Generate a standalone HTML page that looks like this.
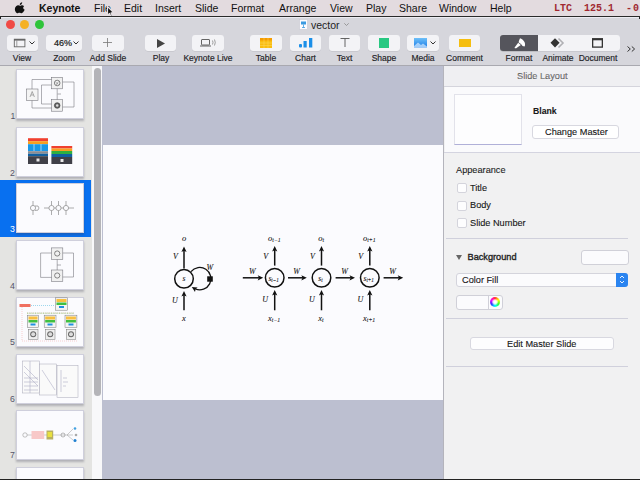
<!DOCTYPE html>
<html><head><meta charset="utf-8">
<style>
*{margin:0;padding:0;box-sizing:border-box}
html,body{width:640px;height:480px;overflow:hidden;background:#000;font-family:"Liberation Sans",sans-serif}
.a{position:absolute}
svg{position:absolute;overflow:visible}
#menubar{left:0;top:0;width:640px;height:16px;background:#e3dbdf}
#menubar span{position:absolute;top:2px;font-size:10.5px;color:#111;line-height:12px;white-space:nowrap}
#menubar span.m{font-family:"Liberation Mono",monospace;font-size:10px;font-weight:bold;color:#a02830;top:2px;transform:scaleY(1.12);transform-origin:0 0}
#mbline{left:0;top:16px;width:640px;height:1px;background:#2a2a2a}
#toolbar{left:0;top:17px;width:640px;height:48px;background:#d6d6dc}
#tbline{left:0;top:65px;width:640px;height:1px;background:#a9a9b0}
.light{position:absolute;width:9px;height:9px;border-radius:50%;top:20px}
.btn{position:absolute;top:35px;height:16px;background:#f3f3f6;border-radius:3px;box-shadow:0 0.5px 0.5px rgba(0,0,0,0.12)}
.lbl{position:absolute;top:53px;width:60px;font-size:8.5px;color:#202024;-webkit-text-stroke:0.15px #202024;white-space:nowrap;text-align:center;line-height:10px}
#sidebar{left:0;top:66px;width:92px;height:413px;background:#e4e4e2}
#strack{left:91.5px;top:66px;width:10.5px;height:413px;background:#f8f8fa}
#sthumb{left:94px;top:67.5px;width:7px;height:328px;background:#b4b4b8;border-radius:4px}
#canvas{left:102px;top:66px;width:342px;height:413px;background:#bcbfd0}
#slide{left:103px;top:145px;width:340px;height:255px;background:#fbfbfe}
#insp{left:443px;top:66px;width:197px;height:413px;background:#f1f1f2;border-left:1px solid #b4b4bc}
.th{position:absolute;left:16px;width:68px;height:50px;background:#fbfbfe;border:1px solid #cfcfdc;box-shadow:0 1.5px 2px rgba(60,60,80,0.3)}
.num{position:absolute;left:10px;font-size:8.7px;color:#55556a;line-height:10px}
.t9{font-size:9.2px;line-height:11px;white-space:nowrap;-webkit-text-stroke:0.1px #000}
.cb{position:absolute;left:457px;width:10px;height:10px;background:#fdfdfe;border:1px solid #d4d4dc;border-radius:2px}
#bottom{left:0;top:479px;width:640px;height:1px;background:#222}
</style></head><body>
<!-- MENUBAR -->
<div id="menubar" class="a">
  <svg style="left:16px;top:1.6px" width="9" height="11" viewBox="0 0 9 11"><path d="M6.2 0.2c0.1 0.8-0.2 1.5-0.7 2-0.5 0.5-1.1 0.8-1.7 0.7-0.1-0.7 0.2-1.4 0.7-1.9 0.4-0.5 1.1-0.8 1.7-0.8zM8.7 7.7c-0.3 0.7-0.5 1-0.9 1.6-0.6 0.9-1.4 1.9-2.3 1.9-0.8 0-1-0.5-2.1-0.5-1.1 0-1.3 0.5-2.1 0.5C0.4 11.2-0.3 10 -0.3 10 -1.5 8.300-1.500 5.500 0.100 4.200 0.700 3.600 1.500 3.300 2.200 3.300 3.000 3.300 3.500 3.800 4.200 3.800 4.800 3.800 5.200 3.300 6.200 3.300 6.800 3.300 7.600 3.600 8.100 4.300 6.700 5.100 6.900 7.100 8.700 7.700z" fill="#111"/></svg>
  <span style="left:39px;font-weight:bold">Keynote</span>
  <span style="left:94px">File</span>
  <span style="left:124px">Edit</span>
  <span style="left:155px">Insert</span>
  <span style="left:195px">Slide</span>
  <span style="left:231px">Format</span>
  <span style="left:279px">Arrange</span>
  <span style="left:330px">View</span>
  <span style="left:366px">Play</span>
  <span style="left:399px">Share</span>
  <span style="left:439px">Window</span>
  <span style="left:490px">Help</span>
  <span class="m" style="left:554px">LTC</span>
  <span class="m" style="left:584px">125.1</span>
  <span class="m" style="left:626px;letter-spacing:1px">-0</span>
  <!-- cursor -->
  <svg style="left:106px;top:5px" width="9" height="13" viewBox="-1 -1 9 13"><path d="M0.5 0.5 L0.6 9.2 L2.6 7.4 L4.0 10.5 L5.3 9.9 L4.0 6.9 L6.8 6.8 Z" fill="#111" stroke="#e8e2e6" stroke-width="1.1" stroke-linejoin="round"/></svg>
</div>
<div id="mbline" class="a"></div><div class="a" style="left:1px;top:17px;width:638px;height:1px;background:#ececf2;z-index:5"></div><div class="a" style="left:0;top:17px;width:1px;height:2px;background:#222;z-index:5"></div><div class="a" style="left:639px;top:17px;width:1px;height:2px;background:#222;z-index:5"></div>
<!-- TOOLBAR -->
<div id="toolbar" class="a">
  <div class="light" style="left:6px;top:3px;background:#f04a45"></div>
  <div class="light" style="left:20px;top:3px;background:#f5b125"></div>
  <div class="light" style="left:34.5px;top:3px;background:#2ec43a"></div>
  <!-- title -->
  <svg style="left:299px;top:2px" width="9" height="11" viewBox="0 0 9 11"><rect x="0.5" y="0.5" width="8" height="10" fill="#fbfbff" stroke="#c8c8d0" stroke-width="0.6"/><rect x="2" y="2.5" width="5" height="3" fill="#3a9ae0"/><path d="M4.5 5.5 V8.5 M3 8.5 H6" stroke="#3a9ae0" stroke-width="0.8"/></svg>
  <span class="a" style="left:311px;top:2px;font-size:10.5px;line-height:12px;color:#222">vector</span>
  <svg style="left:344px;top:6px" width="5" height="3" viewBox="0 0 5 3"><path d="M0.3 0.3 L2.5 2.5 L4.7 0.3" fill="none" stroke="#888" stroke-width="0.8"/></svg>
</div>
<div class="btn" style="left:7px;width:31px"></div>
<div class="btn" style="left:46px;width:36px"></div>
<div class="btn" style="left:92px;width:32px"></div>
<div class="btn" style="left:145px;width:31px"></div>
<div class="btn" style="left:192px;width:32px"></div>
<div class="btn" style="left:250px;width:32px"></div>
<div class="btn" style="left:290px;width:31px"></div>
<div class="btn" style="left:329px;width:31px"></div>
<div class="btn" style="left:368px;width:32px"></div>
<div class="btn" style="left:407px;width:32px"></div>
<div class="btn" style="left:449px;width:31px"></div>
<div class="btn" style="left:500px;width:120px"></div>
<div class="btn" style="left:500px;width:38px;background:#55555c;border-radius:3px 0 0 3px"></div>
<!-- icons -->
<svg style="left:13px;top:38px" width="14" height="10" viewBox="0 0 14 10"><rect x="1.3" y="1.2" width="10.6" height="7.6" fill="none" stroke="#666" stroke-width="0.9"/><rect x="1" y="1" width="11.2" height="1.6" fill="#666"/><path d="M3.8 2.5 V8.8" stroke="#777" stroke-width="0.7"/></svg>
<svg style="left:29px;top:41px" width="6" height="4" viewBox="0 0 6 4"><path d="M0.5 0.5 L3 3 L5.5 0.5" fill="none" stroke="#333" stroke-width="1"/></svg>
<span class="a" style="left:54px;top:38px;font-size:9px;line-height:10px;color:#1a1a1a;-webkit-text-stroke:0.2px #1a1a1a">46%</span>
<svg style="left:73px;top:41px" width="6" height="4" viewBox="0 0 6 4"><path d="M0.5 0.5 L3 3 L5.5 0.5" fill="none" stroke="#333" stroke-width="1"/></svg>
<svg style="left:103px;top:38px" width="9" height="9" viewBox="0 0 9 9"><path d="M4.5 0 V9 M0 4.5 H9" stroke="#777" stroke-width="0.8"/></svg>
<svg style="left:157px;top:38.5px" width="8" height="9" viewBox="0 0 8 9"><path d="M0 0 L8 4.5 L0 9 Z" fill="#444"/></svg>
<svg style="left:200px;top:39px" width="17" height="8" viewBox="0 0 17 8"><rect x="1.5" y="0.5" width="8" height="5.5" rx="0.5" fill="none" stroke="#555" stroke-width="0.9"/><path d="M0 7 H11" stroke="#555" stroke-width="0.9"/><path d="M12.5 1.5 Q13.5 3.5 12.5 5.5 M14.5 0.5 Q16 3.5 14.5 6.5" fill="none" stroke="#777" stroke-width="0.7"/></svg>
<svg style="left:260px;top:38px" width="12" height="10" viewBox="0 0 12 10"><rect x="0" y="0" width="12" height="10" fill="#f9bd10"/><rect x="0" y="0" width="12" height="2.5" fill="#f59c00"/><path d="M4 0 V10 M8 0 V10 M0 5 H12 M0 7.5 H12" stroke="#fdd860" stroke-width="0.5"/></svg>
<svg style="left:299px;top:38px" width="14" height="10" viewBox="0 0 14 10"><rect x="0" y="6" width="3" height="3.5" rx="1" fill="#1b8fe8"/><rect x="4.5" y="3" width="3.2" height="6.5" fill="#1b8fe8"/><rect x="10" y="0" width="3.3" height="9.5" fill="#1b8fe8"/></svg>
<svg style="left:340px;top:38px" width="10" height="9" viewBox="0 0 10 9"><path d="M0.5 0.5 H9.5 M5 0.5 V9" stroke="#555" stroke-width="0.9"/></svg>
<div class="a" style="left:379px;top:38px;width:10px;height:10px;background:#28c882"></div>
<svg style="left:414px;top:38px" width="13" height="10" viewBox="0 0 13 10"><defs><linearGradient id="mg" x1="0" y1="0" x2="0" y2="1"><stop offset="0" stop-color="#6ec0f8"/><stop offset="1" stop-color="#1a7ce8"/></linearGradient></defs><rect x="0" y="0" width="13" height="9.5" fill="url(#mg)"/><path d="M0 8 L4 4.5 L7 7 L9 5.5 L13 8.5 V9.5 H0Z" fill="#d8ecff" opacity="0.7"/></svg>
<svg style="left:430px;top:41px" width="6" height="4" viewBox="0 0 6 4"><path d="M0.5 0.5 L3 3 L5.5 0.5" fill="none" stroke="#333" stroke-width="1"/></svg>
<div class="a" style="left:459px;top:38.5px;width:11.5px;height:8.5px;background:#f5be10"></div>
<svg style="left:508px;top:34px" width="24" height="18" viewBox="508 34 24 18"><path d="M520 38.2 C521.5 38.5 523.5 40 524.5 42 C525.2 43.5 525.3 45.5 524.5 46.6 L522.5 46 C522 44.8 521 43.8 519.8 43.2 L518.6 42.2 C519 40.8 519.3 39.3 520 38.2 Z" fill="#fff"/><path d="M518.2 42.8 L520.8 45 L516.2 48.2 C515.5 48.6 514.6 48.2 514.6 47.4 Z" fill="#fff"/></svg>
<svg style="left:550px;top:38px" width="14" height="10" viewBox="0 0 14 10"><path d="M8.5 0.5 L13 5 L8.5 9.5" fill="none" stroke="#b0b0b4" stroke-width="1.6"/><path d="M5 0.3 L9.6 4.8 L5 9.4 L0.5 4.8 Z" fill="#333"/></svg>
<svg style="left:592px;top:38px" width="11" height="10" viewBox="0 0 11 10"><rect x="0.65" y="0.9" width="9.7" height="8.2" fill="none" stroke="#333" stroke-width="1.3"/><rect x="0" y="0.3" width="11" height="2" fill="#333"/></svg>
<svg style="left:627px;top:45.5px" width="9" height="6" viewBox="0 0 9 6"><path d="M0.5 0.5 L3.3 3 L0.5 5.5 M4.8 0.5 L7.6 3 L4.8 5.5" fill="none" stroke="#333" stroke-width="1"/></svg>
<!-- labels -->
<div class="lbl" style="left:-8px">View</div>
<div class="lbl" style="left:34px">Zoom</div>
<div class="lbl" style="left:78px">Add Slide</div>
<div class="lbl" style="left:131px">Play</div>
<div class="lbl" style="left:178px">Keynote Live</div>
<div class="lbl" style="left:236px">Table</div>
<div class="lbl" style="left:275.5px">Chart</div>
<div class="lbl" style="left:314.5px">Text</div>
<div class="lbl" style="left:354px">Shape</div>
<div class="lbl" style="left:393px">Media</div>
<div class="lbl" style="left:434.5px">Comment</div>
<div class="lbl" style="left:489px">Format</div>
<div class="lbl" style="left:528px">Animate</div>
<div class="lbl" style="left:568px">Document</div>
<div id="tbline" class="a"></div>
<!-- BODY -->
<div id="sidebar" class="a"></div>
<div id="strack" class="a"></div>
<div id="sthumb" class="a"></div>
<div id="canvas" class="a"></div>
<div id="slide" class="a"></div>
<svg class="a" style="left:103px;top:145px" width="340" height="255" viewBox="103 145 340 255"><circle cx="184.0" cy="278.8" r="9.3" fill="none" stroke="#111" stroke-width="1.5"/><path d="M184.0 268.5 L184.0 250.0" stroke="#111" stroke-width="1.5"/><path d="M184.0 246.5 L186.60 252.00 L184.00 250.70 L181.40 252.00 Z" fill="#111"/><path d="M184.0 310.3 L184.0 294.6" stroke="#111" stroke-width="1.5"/><path d="M184.0 291.1 L186.60 296.60 L184.00 295.30 L181.40 296.60 Z" fill="#111"/><text x="184.0" y="281.2" font-family="Liberation Serif" font-style="italic" font-size="7.5" text-anchor="middle" fill="#111" stroke="#111" stroke-width="0.08">s</text><text x="184.0" y="240.8" font-family="Liberation Serif" font-style="italic" font-size="8.5" text-anchor="middle" fill="#111" stroke="#111" stroke-width="0.08">o</text><text x="175.5" y="259.3" font-family="Liberation Serif" font-style="italic" font-size="8" text-anchor="middle" fill="#111" stroke="#111" stroke-width="0.08">V</text><text x="175.0" y="303.4" font-family="Liberation Serif" font-style="italic" font-size="8" text-anchor="middle" fill="#111" stroke="#111" stroke-width="0.08">U</text><text x="184.0" y="321.0" font-family="Liberation Serif" font-style="italic" font-size="8.5" text-anchor="middle" fill="#111" stroke="#111" stroke-width="0.08">x</text><path d="M191 271.6 A 11.2 11.2 0 1 1 195.5 289" fill="none" stroke="#111" stroke-width="1.3"/><path d="M191.8 287.0 L197.6 287.6 L195.6 289.2 L195.0 292.0 Z" fill="#111"/><rect x="207.2" y="276.3" width="5.6" height="5.4" fill="#111"/><text x="209.8" y="269.8" font-family="Liberation Serif" font-style="italic" font-size="8" text-anchor="middle" fill="#111" stroke="#111" stroke-width="0.08">W</text><circle cx="274.7" cy="277.8" r="9.3" fill="none" stroke="#111" stroke-width="1.5"/><path d="M274.7 265.6 L274.7 249.5" stroke="#111" stroke-width="1.5"/><path d="M274.7 246.0 L277.30 251.50 L274.70 250.20 L272.10 251.50 Z" fill="#111"/><path d="M274.7 310.3 L274.7 293.6" stroke="#111" stroke-width="1.5"/><path d="M274.7 290.1 L277.30 295.60 L274.70 294.30 L272.10 295.60 Z" fill="#111"/><text x="268.4" y="280.8" font-family="Liberation Serif" font-style="italic" font-size="7.5" text-anchor="start" fill="#111" stroke="#111" stroke-width="0.08">s<tspan font-size="5.2" dy="1.2" font-style="italic">t−1</tspan></text><text x="267.9" y="240.8" font-family="Liberation Serif" font-style="italic" font-size="8.5" text-anchor="start" fill="#111" stroke="#111" stroke-width="0.08">o<tspan font-size="5.8" dy="1.2" font-style="italic">t−1</tspan></text><text x="265.7" y="258.8" font-family="Liberation Serif" font-style="italic" font-size="8" text-anchor="middle" fill="#111" stroke="#111" stroke-width="0.08">V</text><text x="265.2" y="301.8" font-family="Liberation Serif" font-style="italic" font-size="8" text-anchor="middle" fill="#111" stroke="#111" stroke-width="0.08">U</text><text x="267.9" y="320.8" font-family="Liberation Serif" font-style="italic" font-size="8.5" text-anchor="start" fill="#111" stroke="#111" stroke-width="0.08">x<tspan font-size="5.8" dy="1.2" font-style="italic">t−1</tspan></text><circle cx="321.5" cy="277.8" r="9.3" fill="none" stroke="#111" stroke-width="1.5"/><path d="M321.5 265.6 L321.5 249.5" stroke="#111" stroke-width="1.5"/><path d="M321.5 246.0 L324.10 251.50 L321.50 250.20 L318.90 251.50 Z" fill="#111"/><path d="M321.5 310.3 L321.5 293.6" stroke="#111" stroke-width="1.5"/><path d="M321.5 290.1 L324.10 295.60 L321.50 294.30 L318.90 295.60 Z" fill="#111"/><text x="318.3" y="280.8" font-family="Liberation Serif" font-style="italic" font-size="7.5" text-anchor="start" fill="#111" stroke="#111" stroke-width="0.08">s<tspan font-size="5.2" dy="1.2" font-style="italic">t</tspan></text><text x="318.2" y="240.8" font-family="Liberation Serif" font-style="italic" font-size="8.5" text-anchor="start" fill="#111" stroke="#111" stroke-width="0.08">o<tspan font-size="5.8" dy="1.2" font-style="italic">t</tspan></text><text x="312.5" y="258.8" font-family="Liberation Serif" font-style="italic" font-size="8" text-anchor="middle" fill="#111" stroke="#111" stroke-width="0.08">V</text><text x="312.0" y="301.8" font-family="Liberation Serif" font-style="italic" font-size="8" text-anchor="middle" fill="#111" stroke="#111" stroke-width="0.08">U</text><text x="318.2" y="320.8" font-family="Liberation Serif" font-style="italic" font-size="8.5" text-anchor="start" fill="#111" stroke="#111" stroke-width="0.08">x<tspan font-size="5.8" dy="1.2" font-style="italic">t</tspan></text><circle cx="369.8" cy="277.8" r="9.3" fill="none" stroke="#111" stroke-width="1.5"/><path d="M369.8 265.6 L369.8 249.5" stroke="#111" stroke-width="1.5"/><path d="M369.8 246.0 L372.40 251.50 L369.80 250.20 L367.20 251.50 Z" fill="#111"/><path d="M369.8 310.3 L369.8 293.6" stroke="#111" stroke-width="1.5"/><path d="M369.8 290.1 L372.40 295.60 L369.80 294.30 L367.20 295.60 Z" fill="#111"/><text x="363.5" y="280.8" font-family="Liberation Serif" font-style="italic" font-size="7.5" text-anchor="start" fill="#111" stroke="#111" stroke-width="0.08">s<tspan font-size="5.2" dy="1.2" font-style="italic">t+1</tspan></text><text x="363.0" y="240.8" font-family="Liberation Serif" font-style="italic" font-size="8.5" text-anchor="start" fill="#111" stroke="#111" stroke-width="0.08">o<tspan font-size="5.8" dy="1.2" font-style="italic">t+1</tspan></text><text x="360.8" y="258.8" font-family="Liberation Serif" font-style="italic" font-size="8" text-anchor="middle" fill="#111" stroke="#111" stroke-width="0.08">V</text><text x="360.3" y="301.8" font-family="Liberation Serif" font-style="italic" font-size="8" text-anchor="middle" fill="#111" stroke="#111" stroke-width="0.08">U</text><text x="363.0" y="320.8" font-family="Liberation Serif" font-style="italic" font-size="8.5" text-anchor="start" fill="#111" stroke="#111" stroke-width="0.08">x<tspan font-size="5.8" dy="1.2" font-style="italic">t+1</tspan></text><path d="M242.8 277.8 L259.7 277.8" stroke="#111" stroke-width="1.5"/><path d="M263.2 277.8 L257.70 280.40 L259.00 277.80 L257.70 275.20 Z" fill="#111"/><text x="252.3" y="273.6" font-family="Liberation Serif" font-style="italic" font-size="8" text-anchor="middle" fill="#111" stroke="#111" stroke-width="0.08">W</text><path d="M288.0 277.8 L303.3 277.8" stroke="#111" stroke-width="1.5"/><path d="M306.8 277.8 L301.30 280.40 L302.60 277.80 L301.30 275.20 Z" fill="#111"/><text x="296.7" y="273.6" font-family="Liberation Serif" font-style="italic" font-size="8" text-anchor="middle" fill="#111" stroke="#111" stroke-width="0.08">W</text><path d="M335.6 277.8 L351.5 277.8" stroke="#111" stroke-width="1.5"/><path d="M355.0 277.8 L349.50 280.40 L350.80 277.80 L349.50 275.20 Z" fill="#111"/><text x="344.6" y="273.6" font-family="Liberation Serif" font-style="italic" font-size="8" text-anchor="middle" fill="#111" stroke="#111" stroke-width="0.08">W</text><path d="M383.6 277.8 L399.7 277.8" stroke="#111" stroke-width="1.5"/><path d="M403.2 277.8 L397.70 280.40 L399.00 277.80 L397.70 275.20 Z" fill="#111"/><text x="392.7" y="273.6" font-family="Liberation Serif" font-style="italic" font-size="8" text-anchor="middle" fill="#111" stroke="#111" stroke-width="0.08">W</text></svg>
<div id="insp" class="a"></div>
<div class="a" style="left:0;top:180px;width:91px;height:57px;background:#0870f0"></div>
<div class="th" style="top:69px"></div>
<div class="th" style="top:126.5px"></div>
<div class="th" style="top:182.5px"></div>
<div class="th" style="top:239.5px"></div>
<div class="th" style="top:296.5px"></div>
<div class="th" style="top:353.5px"></div>
<div class="th" style="top:410px"></div>
<div class="th" style="top:466.5px"></div>
<!-- INSPECTOR -->
<div class="a" style="left:444px;top:66px;width:196px;height:20px;background:#efeff2"></div>
<div class="a" style="left:444px;top:86px;width:196px;height:1px;background:#d4d4dc"></div>
<div class="a" style="left:445px;top:87px;width:195px;height:65px;background:#fafafc"></div>
<div class="a" style="left:444px;top:152px;width:196px;height:1px;background:#d4d4e0"></div>
<span class="a t9" style="left:517px;top:71px;color:#808080">Slide Layout</span>
<div class="a" style="left:454px;top:94px;width:68px;height:51px;background:#fdfdfe;border:1px solid #e2e2ea;border-bottom-color:#b0b0d8"></div>
<span class="a t9" style="left:533px;top:106px;font-weight:bold;font-size:8.7px;color:#1a1a1a">Blank</span>
<div class="a" style="left:532px;top:125px;width:87px;height:14px;background:#fff;border:1px solid #d8d8e0;border-radius:3px"></div>
<span class="a t9" style="left:545px;top:127px;color:#1a1a1a">Change Master</span>
<span class="a t9" style="left:456px;top:165px;color:#2a2a2a">Appearance</span>
<div class="cb" style="top:183px"></div><span class="a t9" style="left:470px;top:183px;color:#1a1a1a">Title</span>
<div class="cb" style="top:200.5px"></div><span class="a t9" style="left:470px;top:200px;color:#1a1a1a">Body</span>
<div class="cb" style="top:218px"></div><span class="a t9" style="left:470px;top:217.5px;color:#1a1a1a">Slide Number</span>
<div class="a" style="left:446px;top:238px;width:182px;height:1px;background:#d0d0dc"></div>
<svg style="left:455.5px;top:255px" width="6" height="5" viewBox="0 0 6 5"><path d="M0 0 H6 L3 5 Z" fill="#666"/></svg>
<span class="a t9" style="left:467.5px;top:252px;font-size:9.2px;-webkit-text-stroke:0.35px #222;color:#222">Background</span>
<div class="a" style="left:580.5px;top:250px;width:48px;height:15px;background:#fbfbfd;border:1px solid #d0d0d8;border-radius:3px"></div>
<div class="a" style="left:455.5px;top:273px;width:172.5px;height:13.5px;background:#fbfbfd;border:1px solid #d4d4dc;border-radius:3px"></div>
<div class="a" style="left:616px;top:273px;width:12px;height:13.5px;background:#2a84f0;border-radius:0 3px 3px 0"></div>
<svg style="left:619px;top:275px" width="6" height="9" viewBox="0 0 6 9"><path d="M1 3 L3 1 L5 3 M1 6 L3 8 L5 6" fill="none" stroke="#fff" stroke-width="0.9"/></svg>
<span class="a t9" style="left:462px;top:274.5px;color:#1a1a1a">Color Fill</span>
<div class="a" style="left:455.5px;top:294.5px;width:47px;height:15px;background:#fbfbfd;border:1px solid #d0d0d8;border-radius:3px"></div>
<div class="a" style="left:488px;top:295px;width:1px;height:14px;background:#d0d0d8"></div>
<div class="a" style="left:489.5px;top:297px;width:10px;height:10px;border-radius:50%;background:conic-gradient(#f33,#ff0,#3f3,#0ff,#33f,#f0f,#f33)"></div>
<div class="a" style="left:491.5px;top:299px;width:6px;height:6px;border-radius:50%;background:radial-gradient(#fff 30%,rgba(255,255,255,0))"></div>
<div class="a" style="left:446px;top:318px;width:182px;height:1px;background:#d0d0dc"></div>
<div class="a" style="left:470px;top:337px;width:144px;height:13px;background:#fdfdfe;border:1px solid #d8d8e0;border-radius:3px"></div>
<span class="a t9" style="left:507px;top:338.5px;color:#1a1a1a">Edit Master Slide</span>
<div class="a" style="left:446px;top:366px;width:182px;height:1px;background:#d0d0dc"></div>

<!-- THUMBNAILS -->
<span class="a num" style="left:10.5px;top:111px">1</span>
<span class="a num" style="left:10px;top:167.5px">2</span>
<span class="a num" style="left:10px;top:224px;color:#fff">3</span>
<span class="a num" style="left:10px;top:280.5px">4</span>
<span class="a num" style="left:10px;top:337px">5</span>
<span class="a num" style="left:10px;top:394px">6</span>
<span class="a num" style="left:10px;top:450px">7</span>
<!-- thumb1 -->
<svg style="left:17px;top:70px" width="66" height="49" viewBox="17 70 66 49">
<g fill="none" stroke="#707078" stroke-width="0.55">
<rect x="26.5" y="89" width="11.5" height="11.5" fill="#f4f4f4"/>
<rect x="51.7" y="77.3" width="11" height="11.5" fill="#f0f0f0"/>
<rect x="51.7" y="99.7" width="11" height="11.5" fill="#f0f0f0"/>
<path d="M32 89 V79.5 H51.7 M32 100.5 V108 H51.7 M51.7 85 H41.5 V104 H51.7 M62.7 82 H74 V107 H62.7 M57.2 88.8 V99.7 M57.5 94 H61"/>
</g>
<circle cx="57.2" cy="83" r="2.8" fill="none" stroke="#555" stroke-width="0.7"/><path d="M55.5 82 L58.5 84.5 M56 85 L58.5 81.5" stroke="#666" stroke-width="0.5"/><circle cx="57.2" cy="105.5" r="2.8" fill="#666" stroke="#333" stroke-width="0.6"/><circle cx="57.2" cy="105.5" r="1.2" fill="#ddd"/><path d="M30 97 L32.2 91.5 L34.4 97 M31 95 H33.5" fill="none" stroke="#777" stroke-width="0.6"/>
</svg>
<!-- thumb2 -->
<svg style="left:17px;top:127px" width="66" height="49" viewBox="17 127 66 49">
<rect x="28" y="138.2" width="20" height="3" fill="#f04030"/>
<rect x="28" y="141.2" width="20" height="3" fill="#f8a020"/>
<rect x="28" y="144.2" width="20" height="7" fill="#1898e8"/>
<path d="M34 144 V151 M41 144 V151" stroke="#bfe4ff" stroke-width="0.8"/>
<rect x="28" y="151.2" width="20" height="2.5" fill="#8c8c90"/>
<rect x="28" y="153.7" width="20" height="2.5" fill="#1060a0"/>
<rect x="28" y="156.2" width="20" height="7.8" fill="#404048"/>
<rect x="36.5" y="158.5" width="3" height="3" fill="#e8e8e8"/>
<rect x="51.4" y="146" width="20.8" height="2.5" fill="#f04030"/>
<rect x="51.4" y="148.5" width="20.8" height="2.5" fill="#f8a020"/>
<rect x="51.4" y="151" width="20.8" height="3" fill="#30b040"/>
<rect x="51.4" y="154" width="20.8" height="3" fill="#1060a0"/>
<rect x="51.4" y="157" width="20.8" height="7" fill="#404048"/>
<rect x="60.5" y="159" width="3" height="3" fill="#e8e8e8"/>
</svg>
<!-- thumb3 -->
<svg style="left:17px;top:183px" width="66" height="50" viewBox="17 183 66 50">
<g fill="none" stroke="#777" stroke-width="0.6">
<circle cx="33" cy="208" r="2.6"/><path d="M35 206 Q39 205 39 208 Q39 211 35 210.5"/>
<path d="M33 201 V205.4 M33 210.6 V215"/>
<circle cx="51.5" cy="208" r="2.6"/><circle cx="58.5" cy="208" r="2.6"/><circle cx="66" cy="208" r="2.6"/>
<path d="M44 208 H48.9 M54.1 208 H55.9 M61.1 208 H63.4 M68.6 208 H74 M51.5 201 V205.4 M51.5 210.6 V215 M58.5 201 V205.4 M58.5 210.6 V215 M66 201 V205.4 M66 210.6 V215"/>
</g>
</svg>
<!-- thumb4 -->
<svg style="left:17px;top:240px" width="66" height="50" viewBox="17 240 66 50">
<g fill="none" stroke="#707078" stroke-width="0.55">
<rect x="51.6" y="247.9" width="11.2" height="11.5" fill="#f0f0f0"/>
<rect x="51.6" y="270" width="11.2" height="11.3" fill="#f0f0f0"/>
<path d="M51.6 253 H40.6 V277.4 H51.6 M62.8 253 H73.5 V277 H62.8 M57.2 259.4 V270 M57.2 265 H61"/>
</g>
<circle cx="57.2" cy="253.5" r="2.6" fill="none" stroke="#666" stroke-width="0.8"/><circle cx="57.2" cy="275.5" r="2.6" fill="none" stroke="#666" stroke-width="0.8"/>
</svg>
<!-- thumb5 -->
<svg style="left:17px;top:297px" width="66" height="50" viewBox="17 297 66 50">
<rect x="19.5" y="304" width="11" height="3" fill="#f07060"/>
<path d="M31 305.5 H55" stroke="#60c0e0" stroke-width="0.6" stroke-dasharray="1 1"/>
<path d="M22 307 V341 H78 M27 313 H74" stroke="#f0a0a0" stroke-width="0.5" stroke-dasharray="1 1" fill="none"/>
<path d="M27 313.2 H74" stroke="#80c060" stroke-width="0.7" stroke-dasharray="1 0.6"/>
<g>
<rect x="55.5" y="297.8" width="11.8" height="12.4" fill="#f4f4f4" stroke="#777" stroke-width="0.5"/>
<rect x="56.5" y="299" width="10" height="3" fill="#f8c040"/><rect x="56.5" y="302.5" width="10" height="2.5" fill="#40c040"/><rect x="59" y="306" width="5" height="2" fill="#2090e0"/>
</g>
<g stroke="#777" stroke-width="0.5">
<rect x="27.5" y="315.2" width="11.1" height="12.4" fill="#f4f4f4"/><rect x="44.2" y="315.2" width="11.8" height="12.4" fill="#f4f4f4"/><rect x="65" y="315.2" width="11.9" height="12.4" fill="#f4f4f4"/>
<rect x="28.5" y="329.3" width="9.5" height="10" fill="#eee"/><rect x="45.5" y="329.3" width="9.5" height="10" fill="#eee"/><rect x="66.3" y="329.3" width="9.5" height="10" fill="#eee"/>
</g>
<g stroke="none">
<rect x="28.5" y="316.5" width="9" height="3" fill="#f8c040"/><rect x="28.5" y="320" width="9" height="2.5" fill="#40c040"/><rect x="30.5" y="323.5" width="5" height="2" fill="#2090e0"/>
<rect x="45.2" y="316.5" width="9.8" height="3" fill="#f8c040"/><rect x="45.2" y="320" width="9.8" height="2.5" fill="#40c040"/><rect x="47.5" y="323.5" width="5" height="2" fill="#2090e0"/>
<rect x="66" y="316.5" width="9.9" height="3" fill="#f8c040"/><rect x="66" y="320" width="9.9" height="2.5" fill="#40c040"/><rect x="68.5" y="323.5" width="5" height="2" fill="#2090e0"/>
<circle cx="33.2" cy="334.3" r="3" fill="#666"/><circle cx="50.2" cy="334.3" r="3" fill="#666"/><circle cx="71" cy="334.3" r="3" fill="#666"/>
<circle cx="33.2" cy="334.3" r="2" fill="#ddd"/><circle cx="50.2" cy="334.3" r="2" fill="#ddd"/><circle cx="71" cy="334.3" r="2" fill="#ddd"/>
</g>
</svg>
<!-- thumb6 -->
<svg style="left:17px;top:354px" width="66" height="50" viewBox="17 354 66 50">
<g stroke="#a8a8b8" stroke-width="0.5" fill="#fafafa">
<rect x="22.5" y="361" width="17" height="32"/>
<rect x="39.5" y="364" width="17" height="31"/>
<rect x="57" y="365.5" width="21" height="32"/>
</g>
<g stroke="#b0b0c8" stroke-width="0.6" fill="none">
<path d="M24 366 L38 380 M24 372 L38 386 M24 378 H38 M24 382 H38 M24 386 H38 M24 390 H38 M42 370 L55 390 M61 370 V392 M63 378 H67 M63 382 H68 M63 386 H66 M30 361 V393"/>
</g>
</svg>
<!-- thumb7 -->
<svg style="left:17px;top:410px" width="66" height="50" viewBox="17 410 66 50">
<circle cx="25" cy="435" r="2.2" fill="none" stroke="#999" stroke-width="0.6"/>
<path d="M27 435 H73 M67 435 L73 429 M67 435 L73 440" stroke="#999" stroke-width="0.5"/>
<rect x="31.5" y="431" width="12.7" height="8" fill="#f8c8c8"/>
<rect x="46.5" y="430.5" width="6.7" height="9" fill="#b8b060"/>
<rect x="47.5" y="432" width="4.5" height="5" fill="#e8e040"/>
<circle cx="63" cy="435" r="2" fill="none" stroke="#888" stroke-width="0.6"/>
<circle cx="75" cy="428.5" r="1.3" fill="#40a0e0"/><circle cx="76" cy="435" r="1.3" fill="#aaa"/><circle cx="75" cy="440.5" r="1.5" fill="#2080d0"/>
</svg>

<div id="bottom" class="a"></div>
</body></html>
